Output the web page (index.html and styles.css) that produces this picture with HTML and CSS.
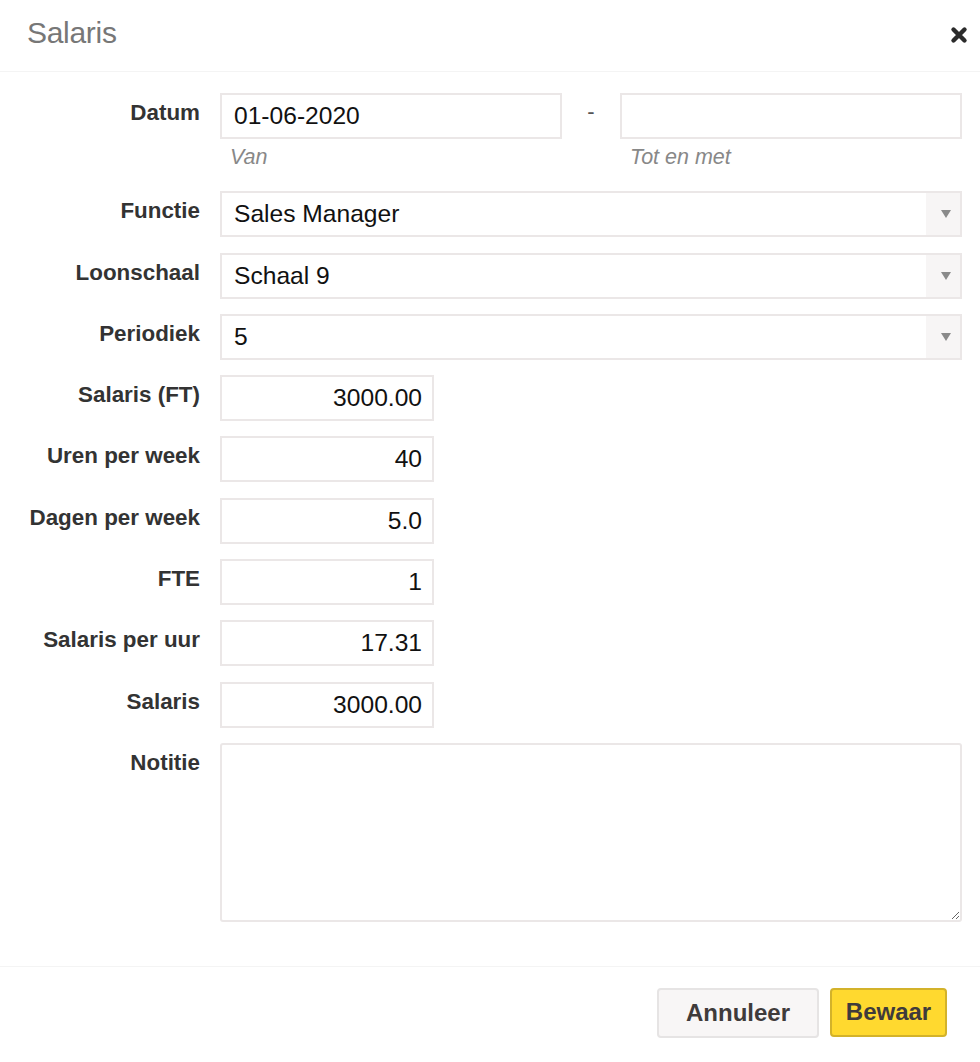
FILE: index.html
```html
<!DOCTYPE html>
<html lang="nl">
<head>
<meta charset="utf-8">
<title>Salaris</title>
<link rel="stylesheet" href="styles.css">
</head>
<body>
<div class="modal">
  <header class="modal-header">
    <h1 class="modal-title">Salaris</h1>
    <button class="close" aria-label="Sluiten">
      <svg width="18" height="18" viewBox="0 0 18 18"><path d="M3.5 3.5 L14.5 14.5 M14.5 3.5 L3.5 14.5" stroke="#2b2b2b" stroke-width="4.4" stroke-linecap="round"/></svg>
    </button>
  </header>
  <div class="modal-body">
    <div class="form">
      <label class="label">Datum</label>
      <div class="date-range">
        <div class="date-col">
          <input class="input" value="01-06-2020">
          <div class="help">Van</div>
        </div>
        <div class="dash">-</div>
        <div class="date-col">
          <input class="input" value="">
          <div class="help">Tot en met</div>
        </div>
      </div>

      <label class="label">Functie</label>
      <div class="select"><span class="select-value">Sales Manager</span><span class="select-arrow"><span class="tri"></span></span></div>

      <label class="label">Loonschaal</label>
      <div class="select"><span class="select-value">Schaal 9</span><span class="select-arrow"><span class="tri"></span></span></div>

      <label class="label">Periodiek</label>
      <div class="select"><span class="select-value">5</span><span class="select-arrow"><span class="tri"></span></span></div>

      <label class="label">Salaris (FT)</label>
      <div><input class="input num" value="3000.00"></div>

      <label class="label">Uren per week</label>
      <div><input class="input num" value="40"></div>

      <label class="label">Dagen per week</label>
      <div><input class="input num" value="5.0"></div>

      <label class="label">FTE</label>
      <div><input class="input num" value="1"></div>

      <label class="label">Salaris per uur</label>
      <div><input class="input num" value="17.31"></div>

      <label class="label">Salaris</label>
      <div><input class="input num" value="3000.00"></div>

      <label class="label">Notitie</label>
      <div><textarea class="textarea"></textarea></div>
    </div>
  </div>
  <footer class="modal-footer">
    <button class="btn btn-cancel">Annuleer</button>
    <button class="btn btn-save">Bewaar</button>
  </footer>
</div>
</body>
</html>
```
FILE: styles.css
```css
* { box-sizing: border-box; }
html, body { margin: 0; padding: 0; background: #fff; }
body { font-family: "Liberation Sans", Arial, sans-serif; color: #333; }

.modal { width: 980px; }

.modal-header {
  height: 72px;
  display: flex;
  align-items: center;
  justify-content: space-between;
  padding: 0 12px 6px 27px;
  border-bottom: 1px solid #f4f4f4;
}
.modal-title {
  margin: 0;
  font-size: 30px;
  font-weight: normal;
  color: #777;
  letter-spacing: -0.3px;
}
.close {
  border: 0;
  background: none;
  padding: 0;
  width: 18px;
  height: 18px;
  margin-top: 4px;
  display: flex;
}

.modal-body { padding: 21px 18px 44px 0; }

.form {
  display: grid;
  grid-template-columns: 200px 1fr;
  column-gap: 20px;
  row-gap: 15.3px;
}

.label {
  text-align: right;
  font-weight: bold;
  font-size: 22.4px;
  line-height: 30px;
  padding-top: 5px;
  color: #333;
}

.input {
  display: block;
  width: 100%;
  height: 46px;
  border: 2px solid #ebe7e7;
  background: #fff;
  padding: 0 12px;
  font-family: "Liberation Sans", Arial, sans-serif;
  font-size: 24.6px;
  color: #111;
  outline: none;
  margin: 0;
}
.input.num {
  width: 214px;
  text-align: right;
  padding-right: 10px;
}

.date-range { display: flex; }
.date-col { flex: 1 1 0; min-width: 0; }
.dash {
  width: 58px;
  height: 46px;
  display: flex;
  align-items: center;
  justify-content: center;
  font-size: 22px;
  color: #555;
  padding-bottom: 8px;
}
.help {
  font-style: italic;
  font-size: 21.5px;
  color: #888;
  line-height: 26px;
  padding: 5px 0 0 10px;
  height: 37px;
}

.select {
  display: flex;
  height: 46px;
  border: 2px solid #ebe7e7;
  background: #fff;
}
.select-value {
  flex: 1;
  display: flex;
  align-items: center;
  padding-left: 12px;
  font-size: 24.6px;
  color: #111;
}
.select-arrow {
  width: 34px;
  background: #f7f5f5;
  display: flex;
  align-items: center;
  justify-content: center;
  padding-left: 5px;
}
.tri {
  width: 0;
  height: 0;
  border-left: 5px solid transparent;
  border-right: 5px solid transparent;
  border-top: 8px solid #8a8a8a;
}

.textarea {
  display: block;
  width: 100%;
  height: 179px;
  border: 2px solid #ebe7e7;
  border-radius: 3px;
  resize: vertical;
  font-family: "Liberation Sans", Arial, sans-serif;
  font-size: 22px;
  outline: none;
  margin: 0;
}

.modal-footer {
  border-top: 1px solid #f4f4f4;
  display: flex;
  justify-content: flex-end;
  align-items: flex-start;
  gap: 11px;
  padding: 21px 33px 0 0;
  height: 97px;
}
.btn {
  height: 50px;
  font-family: "Liberation Sans", Arial, sans-serif;
  font-weight: bold;
  font-size: 24px;
  color: #3f3b3b;
  border-radius: 4px;
  padding: 0;
  display: flex;
  align-items: center;
  justify-content: center;
}
.btn-cancel {
  width: 162px;
  background: #f8f6f6;
  border: 2px solid #e6e4e4;
}
.btn-save {
  width: 117px;
  height: 49px;
  background: #ffd92f;
  border: 2px solid #d3b22a;
}
```
